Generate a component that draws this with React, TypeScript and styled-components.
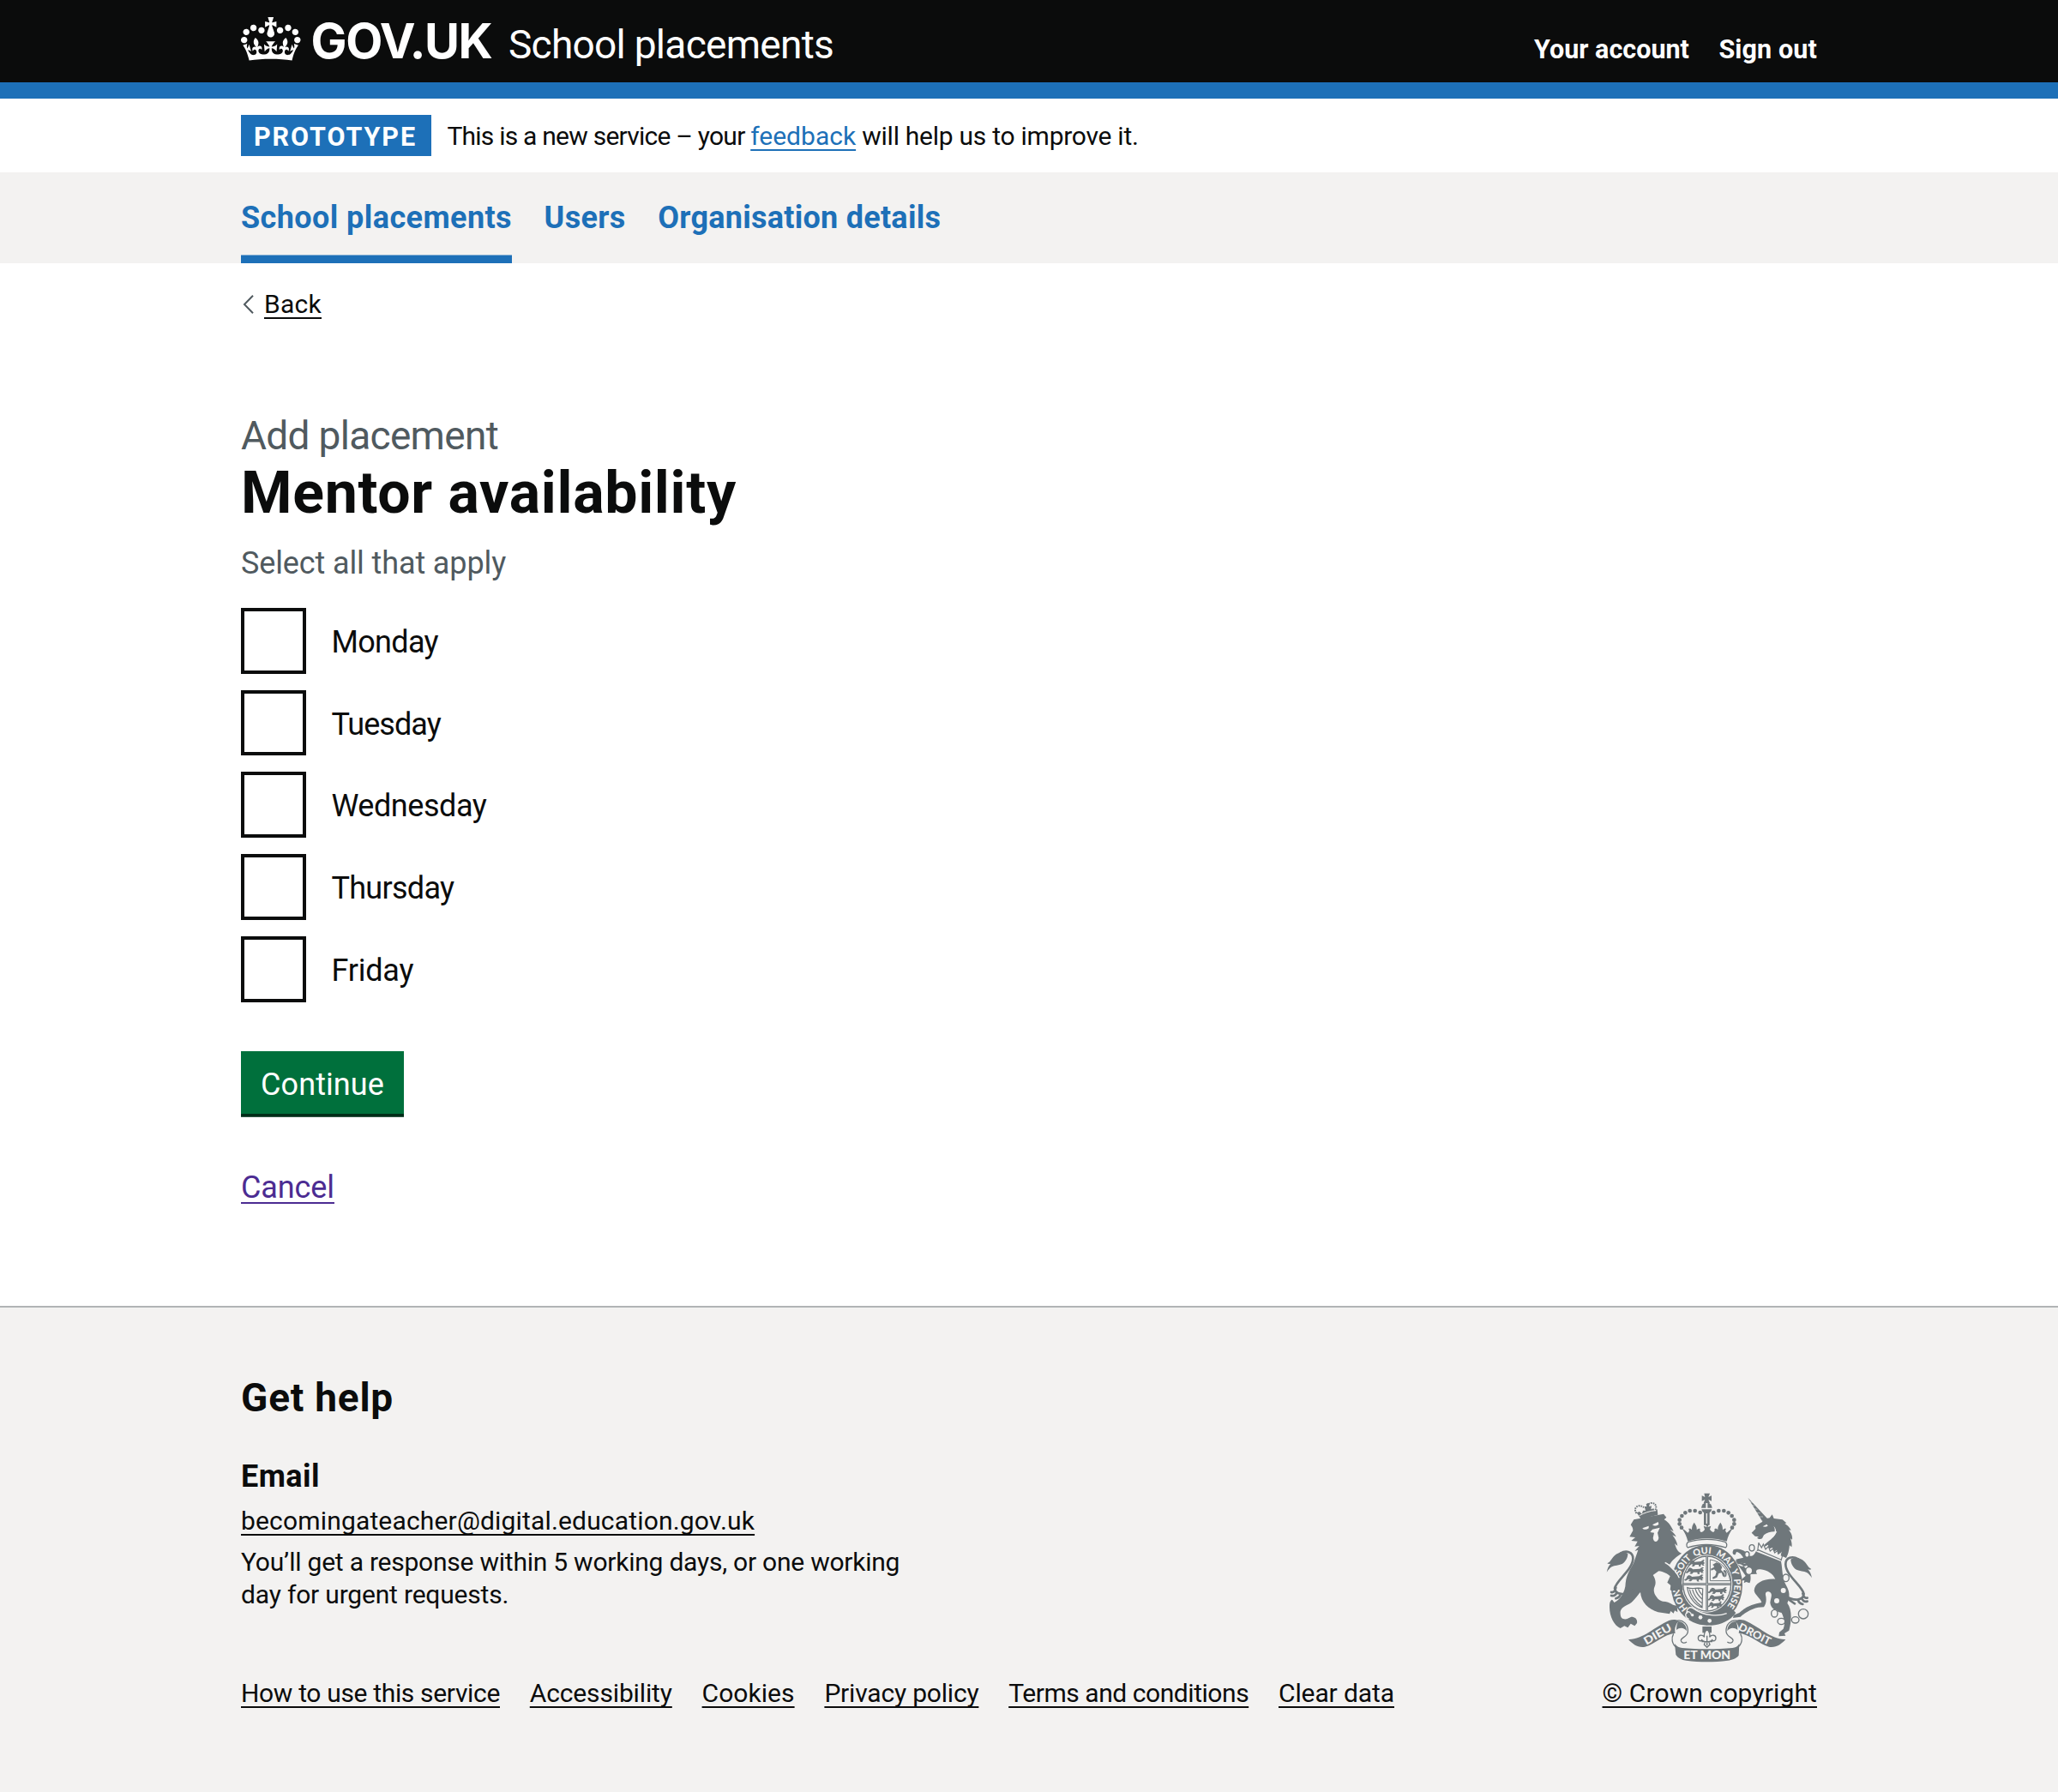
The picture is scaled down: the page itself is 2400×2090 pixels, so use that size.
import React from "react";
import styled, { createGlobalStyle } from "styled-components";

const c = {
  ink: "#0b0c0c",
  blue: "#1d70b8",
  grey: "#f3f2f1",
  secondary: "#505a5f",
  border: "#b1b4b6",
  green: "#00703c",
  greenDark: "#002d18",
  visited: "#4c2c92",
  crest: "#6f777b",
};

const GlobalStyle = createGlobalStyle`
  * { box-sizing: border-box; }
  body {
    margin: 0;
    background: #fff;
    color: ${c.ink};
    font-family: Roboto, "Liberation Sans", sans-serif;
    font-size: 30px;
  }
  h1, h2, h3, p, ul { margin: 0; padding: 0; }
  ul { list-style: none; }
`;

type Track = { $ls?: number };

const Page = styled.div`
  display: flex;
  flex-direction: column;
  min-height: 2090px;
`;

const Container = styled.div`
  width: 1838px;
  margin: 0 auto;
`;

/* Header */

const Header = styled.header`
  height: 115px;
  background: ${c.ink};
  color: #fff;
  border-bottom: 19px solid ${c.blue};
`;

const HeaderRow = styled(Container)`
  display: flex;
  align-items: baseline;
  height: 96px;
  padding-top: 18px;
`;

const Crown = styled.svg`
  align-self: flex-start;
  width: 69.5px;
  height: 51px;
  margin: 2.3px 12px 0 0;
  fill: #fff;
`;

const Wordmark = styled.span`
  width: 230.5px;
  font: 700 56px/60px Inter, sans-serif;
  letter-spacing: -1.39px;
`;

const ServiceName = styled.span`
  font-size: 46px;
  line-height: 60px;
  letter-spacing: -0.72px;
`;

const AccountNav = styled.nav`
  display: flex;
  gap: 34.5px;
  margin-left: auto;
`;

const AccountLink = styled.a<Track>`
  font-size: 30.5px;
  font-weight: 700;
  letter-spacing: ${(p) => p.$ls ?? 0}px;
`;

/* Phase banner */

const PhaseBanner = styled(Container)`
  display: flex;
  align-items: flex-start;
  gap: 18.4px;
  height: 86px;
  padding-top: 19px;
`;

const PhaseTag = styled.strong`
  width: 222px;
  height: 48px;
  padding-left: 15px;
  background: ${c.blue};
  color: #fff;
  font-size: 30.5px;
  line-height: 51px;
  letter-spacing: 1.93px;
`;

const PhaseText = styled.p`
  line-height: 50px;
  white-space: pre;
`;

const Run = styled.span<Track>`
  letter-spacing: ${(p) => p.$ls ?? 0}px;
`;

const Link = styled.a<Track & { $color?: string; $offset?: number }>`
  color: ${(p) => p.$color ?? c.ink};
  letter-spacing: ${(p) => p.$ls ?? 0}px;
  text-decoration: underline;
  text-decoration-thickness: 2px;
  text-underline-offset: ${(p) => p.$offset ?? 4.5}px;
  text-decoration-skip-ink: none;
`;

/* Primary navigation */

const NavBar = styled.nav`
  height: 105.5px;
  background: ${c.grey};
`;

const NavList = styled(Container)`
  display: flex;
  gap: 37.6px;
`;

const NavLink = styled.a<Track & { $current?: boolean }>`
  height: 105.5px;
  color: ${c.blue};
  font-size: 36px;
  font-weight: 700;
  line-height: 107px;
  letter-spacing: ${(p) => p.$ls ?? 0}px;
  box-shadow: ${(p) => (p.$current ? `inset 0 -9.5px ${c.blue}` : "none")};
`;

/* Main form */

const Main = styled(Container)`
  display: flex;
  flex-direction: column;
  align-items: flex-start;
  flex: 1;
  padding-top: 29px;
`;

const BackRow = styled.div`
  display: flex;
  align-items: center;
  gap: 12px;
  height: 38px;
  margin-bottom: 104px;
  line-height: 38px;
`;

const Chevron = styled.svg`
  width: 13px;
  height: 22px;
  margin-left: 2px;
  fill: none;
  stroke: ${c.secondary};
  stroke-width: 2;
`;

const Caption = styled.span`
  color: ${c.secondary};
  font-size: 46px;
  line-height: 60px;
  letter-spacing: -0.69px;
`;

const Title = styled.h1`
  margin-top: 1.5px;
  font-size: 68px;
  line-height: 72px;
  letter-spacing: 0.69px;
`;

const Hint = styled.div`
  margin: 22.4px 0 27.6px;
  color: ${c.secondary};
  font-size: 36px;
  line-height: 48px;
  letter-spacing: -0.12px;
`;

const Options = styled.div`
  display: flex;
  flex-direction: column;
  gap: 19.15px;
`;

const Option = styled.label<Track>`
  display: flex;
  gap: 29px;
  height: 76.6px;
  font-size: 36px;
  line-height: 81px;
  letter-spacing: ${(p) => p.$ls ?? 0}px;
`;

const Checkbox = styled.input`
  appearance: none;
  width: 76.4px;
  height: 76.6px;
  margin: 0;
  border: 4px solid ${c.ink};
  border-radius: 0;
  background: #fff;
`;

const SubmitButton = styled.button`
  width: 190px;
  height: 73px;
  margin: 57.4px 0 62.4px;
  padding: 2px 0 0;
  border: 0;
  background: ${c.green};
  box-shadow: 0 3.8px 0 ${c.greenDark};
  color: #fff;
  font: 400 36px/75px Roboto, sans-serif;
  letter-spacing: 0.1px;
`;

const CancelRow = styled.p`
  font-size: 36px;
  line-height: 48px;
`;

/* Footer */

const Footer = styled.footer`
  height: 567.4px;
  padding-top: 75.7px;
  border-top: 2px solid ${c.border};
  background: ${c.grey};
`;

const FooterRow = styled(Container)`
  display: flex;
  align-items: flex-end;
  justify-content: space-between;
`;

const HelpTitle = styled.h2`
  font-size: 46px;
  line-height: 60px;
  letter-spacing: 0.77px;
`;

const HelpSubtitle = styled.h3`
  margin: 37.4px 0 9.6px;
  font-size: 36px;
  line-height: 48px;
  letter-spacing: 0.45px;
`;

const HelpLine = styled.p<Track>`
  line-height: 38.3px;
  letter-spacing: ${(p) => p.$ls ?? 0}px;
`;

const HelpText = styled.div`
  margin: 9.6px 0 76.6px;
`;

const FooterLinks = styled.ul`
  display: flex;
  gap: 34.8px;
  line-height: 38.3px;
`;

const Copyright = styled.div`
  display: flex;
  flex-direction: column;
  align-items: center;
  gap: 17.5px;
  line-height: 38.3px;
`;

const Crest = styled.svg`
  display: block;
  width: 241.7px;
  height: 198.3px;
`;

const days: [string, number][] = [
  ["Monday", -0.65],
  ["Tuesday", -0.95],
  ["Wednesday", -0.44],
  ["Thursday", -0.7],
  ["Friday", -0.2],
];

const footerLinks: [string, number][] = [
  ["How to use this service", -0.338],
  ["Accessibility", -0.145],
  ["Cookies", 0.05],
  ["Privacy policy", -0.2],
  ["Terms and conditions", -0.444],
  ["Clear data", -0.103],
];

function CrownIcon() {
  return (
    <Crown viewBox="0 0 132 97" preserveAspectRatio="none" aria-hidden="true">
      <path d="M25 30.2c3.5 1.5 7.7-.2 9.1-3.7 1.5-3.6-.2-7.8-3.9-9.2-3.6-1.4-7.6.3-9.1 3.9-1.4 3.5.3 7.5 3.9 9zM9 39.5c3.6 1.5 7.8-.2 9.2-3.7 1.5-3.6-.2-7.8-3.9-9.1-3.6-1.5-7.6.2-9.1 3.8-1.4 3.5.3 7.5 3.8 9zM4.4 57.2c3.5 1.5 7.7-.2 9.1-3.8 1.5-3.6-.2-7.7-3.9-9.1-3.5-1.5-7.6.3-9.1 3.8-1.4 3.5.3 7.6 3.9 9.1zm38.3-21.4c3.5 1.5 7.7-.2 9.1-3.8 1.5-3.6-.2-7.7-3.9-9.1-3.6-1.5-7.6.3-9.1 3.8-1.3 3.6.4 7.7 3.9 9.1zm64.4-5.6c-3.6 1.5-7.8-.2-9.1-3.7-1.5-3.6.2-7.8 3.8-9.2 3.6-1.4 7.7.3 9.2 3.9 1.3 3.5-.4 7.5-3.9 9zm15.9 9.3c-3.6 1.5-7.7-.2-9.1-3.7-1.5-3.6.2-7.8 3.7-9.1 3.6-1.5 7.7.2 9.2 3.8 1.5 3.5-.3 7.5-3.8 9zm4.7 17.7c-3.6 1.5-7.8-.2-9.2-3.8-1.5-3.6.2-7.7 3.9-9.1 3.6-1.5 7.7.3 9.2 3.8 1.3 3.5-.4 7.6-3.9 9.1zM89.3 35.8c-3.6 1.5-7.8-.2-9.2-3.8-1.4-3.6.2-7.7 3.9-9.1 3.6-1.5 7.7.3 9.2 3.8 1.4 3.6-.3 7.7-3.9 9.1zM69.7 17.7l8.9 4.7V9.3l-8.9 2.8c-.2-.3-.5-.6-.9-.9L72.4 0H59.6l3.5 11.2c-.3.3-.6.5-.9.9l-8.8-2.8v13.1l8.8-4.7c.3.3.6.7.9.9l-5 15.4v.1c-.2.8-.4 1.6-.4 2.4 0 4.1 3.1 7.5 7 8.1h.2c.3 0 .7.1 1 .1.4 0 .7 0 1-.1h.2c4-.6 7.1-4.1 7.1-8.1 0-.8-.1-1.7-.4-2.4V34l-5.1-15.4c.4-.2.7-.6 1-.9zM66 92.8c16.9 0 32.8 1.1 47.1 3.2 4-16.9 8.9-26.7 14-33.5l-9.6-3.4c1 4.9 1.1 7.2 0 10.2-1.5-1.4-3-4.3-4.2-8.7L108.6 76c2.8-2 5-3.2 7.5-3.3-4.4 9.4-10 11.9-13.6 11.2-4.3-.8-6.3-4.6-5.6-7.9 1-4.7 5.7-5.9 8-.5 4.3-8.7-3-11.4-7.6-8.8 7.1-7.2 7.9-13.5 2.1-21.1-8 6.1-8.1 12.3-4.5 20.8-4.7-5.4-12.1-2.5-9.5 6.2 3.4-5.2 7.9-2 7.2 3.1-.6 4.3-6.4 7.8-13.5 7.2-10.3-.9-10.9-8-11.2-13.8 2.5-.5 7.1 1.8 11 7.3L80.2 60c-4.1 4.4-8 5.3-12.3 5.4 1.4-4.4 8-11.6 8-11.6H55.5s6.4 7.2 7.9 11.6c-4.2-.1-8-1-12.3-5.4l1.4 16.4c3.9-5.5 8.5-7.7 10.9-7.3-.3 5.8-.9 12.8-11.1 13.8-7.2.6-12.9-2.9-13.5-7.2-.7-5 3.8-8.3 7.1-3.1 2.7-8.7-4.6-11.6-9.4-6.2 3.7-8.5 3.6-14.7-4.6-20.8-5.8 7.6-5 13.9 2.2 21.1-4.7-2.6-11.9.1-7.7 8.8 2.3-5.5 7.1-4.2 8.1.5.7 3.3-1.3 7.1-5.7 7.9-3.5.7-9-1.8-13.5-11.2 2.5.1 4.7 1.3 7.5 3.3l-4.7-15.4c-1.2 4.4-2.7 7.2-4.3 8.7-1.1-3-.9-5.3 0-10.2l-9.5 3.4c5 6.9 9.9 16.7 14 33.5 14.8-2.1 30.8-3.2 47.7-3.2z" />
    </Crown>
  );
}

const archBeads = [
  [429, 129], [411, 123], [393, 123], [377, 130], [365, 141], [357, 155], [357, 169], [364, 182],
];

const passant =
  "M0 8l6-6 6 2 4 4 22-2 8-6 5 2-5 4 5 6-5 5 5 3-7 1-4-5-4 5 2 4-7-1-1-6-12 0-5 6-8-1 5-6-5-1-8 6-5-3 7-6z";

function Tail() {
  return (
    <g>
      <path d="M102 338c3-16 8-24 14-30-6 2-10 1-12-1 12-6 14-16 24-26 14-14 34-18 48-8 0 14-8 28-20 36-12 6-26 4-36 10-8 5-13 12-18 19z" />
      <path
        d="M150 272c20-12 44-6 44 18 0 38-58 76-64 104 2 24 36 26 62 8M134 392c-2 12-8 18-16 16M138 408c-4 10-12 14-20 12M150 416c-2 8-8 12-16 14M196 402c-8 8-16 16-34 26"
        fill="none"
        stroke={c.crest}
        strokeWidth="8"
        strokeLinecap="round"
      />
    </g>
  );
}

function SideScroll() {
  return (
    <g>
      <path d="M178 573c48 2 92-44 142-66 12-4 26-4 34 2-10 10-16 26-12 42-40 4-70 38-106 48-24 4-42-8-58-26z" />
      <path
        d="M346 508c24-6 42 14 40 38-2 20-26 20-24 32 2 8 12 10 20 4M336 553c-8 14-8 36 12 50"
        fill="none"
        stroke={c.crest}
        strokeWidth="4"
      />
      <path d="M352 510c16 0 30 14 30 34-8-12-24-14-36-4 0-12 2-22 6-30z" />
    </g>
  );
}

function RoyalArms() {
  return (
    <Crest viewBox="100 60 725 595" fill={c.crest} aria-hidden="true">
      {/* imperial crown */}
      <path d="M443 62h20l-5 13 11-5v19l-11-5 5 12h-22l5-12-11 5V70l11 5z" />
      <path d="M433 113a19 19 0 0 1 38 0z" />
      <path d="M434 118h36c-2 7-6 11-8 12v43h-20v-43c-4-2-7-6-8-12z" />
      <path d="M449 96h6v20h-6zM450 132h4v36h-4z" fill={c.grey} />
      {archBeads.map(([x, y]) => (
        <g key={x + "-" + y}>
          <circle cx={x} cy={y} r="7" />
          <circle cx={905 - x} cy={y} r="7" />
        </g>
      ))}
      <path d="M366 186c8 2 12 8 20 14 6-4 6-10 2-14 6-2 10 0 12 4 0-10 2-18 8-26 6 8 10 16 9 26 4-4 8-6 12-3-2 6 0 10 4 11 6-2 10-6 12-10l-4-12 12 4-6-12h14l-6 12 12-4-4 12c4 6 8 8 12 10 4-2 6-6 4-11 5-3 9-1 12 3-1-10 3-18 9-26 6 8 8 16 8 26 4-4 7-6 12-4-4 5-3 10 2 14 8-6 12-12 20-14-10 14-16 28-20 44-44-14-94-14-136 0-4-16-10-30-20-44z" />
      <path
        d="M388 232c40-12 90-12 128 0 8 4 8 16 2 20-42-14-92-14-132 0-6-4-6-16 2-20z"
        fill={c.grey}
        stroke={c.crest}
        strokeWidth="4"
      />

      {/* garter */}
      <ellipse cx="452" cy="383" rx="125" ry="141" />
      <ellipse cx="453" cy="378" rx="89" ry="101" fill={c.grey} />
      <ellipse cx="453" cy="378" rx="84" ry="96" fill="none" stroke={c.crest} strokeWidth="4" />
      <path d="M449 282h8v190h-8zM370 376h166v8H370z" />
      <path d="M453 282v190M370 380h166" stroke={c.grey} strokeWidth="1.5" />
      <g>
        <path d={passant} transform="translate(394 294)" />
        <path d={passant} transform="translate(386 320) scale(1.1 1)" />
        <path d={passant} transform="translate(382 346) scale(1.15 1)" />
        <path d={passant} transform="translate(464 390) scale(1.15 1)" />
        <path d={passant} transform="translate(463 415)" />
        <path d={passant} transform="translate(462 440) scale(.85 .95)" />
      </g>
      <path d="M472 312l14-8 12 4 8 12-4 10 12 12 2 14-8-4-4-12-10 2-6 14-14 6-2-6 10-6 4-14-8-8-10 4-2-6 12-6-2-6zM512 330c10 0 12 12 8 24l-5-2c3-8 2-14-5-16z" />
      <path d="M464 294c38 6 64 34 70 74h-70z" fill="none" stroke={c.crest} strokeWidth="3" />
      <path
        d="M384 392c22 8 34-4 54 4l-2 66c-22-8-46-32-52-70zM392 398c4 20 18 42 44 62M402 398c4 18 14 34 33 48M412 396c4 14 12 26 24 36M422 394c3 10 8 18 14 24"
        fill="none"
        stroke={c.crest}
        strokeWidth="3.5"
      />
      <path d="M378 470c8-10 24-14 34-2 34 22 82 24 128-2l14 14c-20 28-52 42-86 44-34 0-68-14-88-34z" />
      <path
        d="M384 482c-6-14 8-26 20-18 40 30 92 28 118 18M390 502c-10-2-16-14-8-24 6-4 16 0 16 10"
        fill="none"
        stroke={c.grey}
        strokeWidth="4"
      />
      <circle cx="402" cy="488" r="5" fill={c.grey} />
      <circle cx="430" cy="496" r="7" fill={c.grey} />
      <circle cx="462" cy="508" r="7" fill={c.grey} />
      <path id="garter-line" d="M390 467A96 110 0 1 1 514 467" fill="none" />
      <g fill={c.grey} fontFamily="Lato, sans-serif" fontWeight="900" fontSize="32">
        <text><textPath href="#garter-line" startOffset="4">HON</textPath></text>
        <text><textPath href="#garter-line" startOffset="126">SOIT</textPath></text>
        <text><textPath href="#garter-line" startOffset="210">QUI</textPath></text>
        <text><textPath href="#garter-line" startOffset="286">MAL</textPath></text>
        <text><textPath href="#garter-line" startOffset="364">Y</textPath></text>
        <text><textPath href="#garter-line" startOffset="396" textLength="100">PENSE</textPath></text>
      </g>

      {/* lion */}
      <path d="M207 130l10-4 8 8 4-12 9 0-4-14h8l-2-8 6-4 5 4 0 8 8-2-2 12 9-3 5 10 8-8 2 20c-20 4-38 10-56 20z" />
      <path d="M216 140c18-10 36-16 56-18" fill="none" stroke={c.grey} strokeWidth="3" />
      <path
        d="M206 132c-8-12-4-24 8-26 8-1 14 2 18 6M272 120c6-10 2-22-10-24-8-1-14 3-18 8"
        fill="none"
        stroke={c.crest}
        strokeWidth="6"
        strokeDasharray="5 3"
      />
      <path
        d="M197 154l104-20 10 12-8 8c12 6 24 20 33 41l-13-7c10 10 18 16 22 26l-13-6c10 14 16 24 18 38l-10-8c6 20 12 30 24 34-18 12-34 24-42 40l-16-10c12 12 26 24 38 40 10 16 24 30 24 56 0 6-6 10-10 4l-4-14-4 18-8 0-4-16-6 14-8-4 2-16-12-10 10-22c-8-8-24-16-40-18l-20 14c8 12 12 26 6 40-6 12-2 26 6 36 6 10 14 14 22 16 14 0 24 4 36 12l14 4 2 22-10-6-4 10-10-8-4 10-40-6c-34-10-60-36-62-70-14 14-24 36-46 44-18 8-26 18-24 32 0 16 10 20 22 18l16-8c14 0 22 8 20 22l-8 10-14-8-10 14-12-6-14 8c-22-8-38-42-38-72 0-14 0-22 8-28 4 2 6 6 8 10 18-6 40-36 40-68 4-36 22-56 28-70l16-46-12 4 16-18-16 2 10-18-22-2 14-12-20-2 12-22c0-10-4-14-8-20z"
      />
      <path d="M306 304l16 10c14 12 26 26 34 44" fill="none" stroke={c.grey} strokeWidth="4" />
      <path d="M227 184l22-8v8c-8 6-18 6-22 0zM262 172l20-10 2 8c-4 6-16 8-22 2zM262 188l26-6-8 18 4 18c-4 18-18 16-20 0l4-18-14-2z" fill={c.grey} />

      <Tail />

      {/* unicorn */}
      <path d="M596 77l68 73-18 9z" />
      <path d="M600 90l12 4M608 102l12 4M617 116l12 2M627 130l12 1M636 144l13 0" stroke={c.grey} strokeWidth="1.5" />
      <path d="M609 200l14-14-1-10 24-14 4-10 22-4 9-12 6 14 30 4 14 12-6 2c12 8 18 14 22 24l-8-2c8 10 14 20 12 34l-6-4c4 12 6 20 4 30l-7-6c-2 12-2 26-12 44l-86-36c12-16 38-26 54-56-18-2-34 2-46 12l-6 12c-6 4-14 2-18-2l6-4-13-2z" />
      <path d="M648 178l14-8 4 6c-6 4-12 4-18 2z" fill={c.grey} />
      <path d="M684 208c8-10 8-22 2-32 14 14 10 32-6 42z" fill={c.grey} />
      <path d="M630 232l14 8 6-6 6 14 10-6 6 14 10-4 6 14 10-6 4 12 12-6-6 28-78-34z" fill={c.grey} />
      <path d="M634 236l10 16 6-12 8 18 10-10 6 16 10-8 6 14 10-8 2 12 10-6M632 260l80 34M630 264l4-30M712 298l8-30" fill="none" stroke={c.crest} strokeWidth="3.5" />
      <path d="M626 266l86 34c6 28 2 56 20 88 12 22 10 40 2 58 16 20 16 60 6 96l-16 10 4 8-24 2 2-14 14-12c8-18 2-40-6-56-24-6-38-18-40-36 2-16 8-26 2-34-10-8-20-4-18 8 4 16 2 30-6 42-30 0-56 12-82 34l-26 4 2-10 20-8c20-20 50-32 78-36-4-16-24-26-26-42 2-26 32-42 74-40-8-18-28-32-52-34-16-2-18 8-12 16l-22 1 4-10-24-28-26-4-6-10 26-6c-4-8-14-20-24-20l-4 10c-10 0-12-8-6-18 18-8 44 4 52 20 10 6 20 2 28-18z" />
      <path d="M552 296c10 20 26 28 44 16M560 310c12-4 30 12 44 34 4 16 0 30-2 32l-12-4-8 4 2-10-10 2c0-8 12-14 14-18z" />
      <g transform="translate(922 20) scale(-1 1)">
        <Tail />
      </g>
      <g fill={c.grey} stroke={c.crest} strokeWidth="4">
        <ellipse cx="610" cy="253" rx="9" ry="11" />
        <ellipse cx="593" cy="276" rx="8" ry="10" />
        <ellipse cx="600" cy="333" rx="12" ry="13" />
        <ellipse cx="729" cy="358" rx="11" ry="13" />
        <ellipse cx="689" cy="482" rx="11" ry="13" />
        <ellipse cx="713" cy="510" rx="13" ry="11" />
        <ellipse cx="762" cy="505" rx="13" ry="11" />
        <circle cx="790" cy="484" r="17" />
      </g>
      <circle cx="720" cy="402" r="9" fill={c.grey} />
      <circle cx="697" cy="438" r="9" fill={c.grey} />

      {/* motto scroll */}
      <SideScroll />
      <g transform="translate(906 0) scale(-1 1)">
        <SideScroll />
      </g>
      <path d="M340 588c8 10 16 14 26 15 56 5 120 5 176 0 10-1 18-5 24-15l-2 41c-10 12-24 16-38 18-50 6-96 6-146 0-16-2-28-8-36-20z" />
      <path d="M437 528h32v22h-32z" />
      <path
        d="M453 538c-8 8-12 16-9 27-8-10-22-8-22 4 0 10 10 12 13 6 4 4 8 6 12 6l-4 10 10 10 10-10-4-10c4 0 8-2 12-6 3 6 13 4 13-6 0-12-14-14-22-4 3-11-1-19-9-27z"
        fill={c.grey}
        stroke={c.crest}
        strokeWidth="4"
      />
      <path d="M453 560v34M434 581h38" stroke={c.crest} strokeWidth="4" />
      <g fill={c.grey} fontFamily="Lato, sans-serif" fontWeight="900">
        <text x="371" y="641" fontSize="41" textLength="164" lengthAdjust="spacingAndGlyphs">ET MON</text>
        <text transform="translate(241 593) rotate(-30)" fontSize="38" textLength="106" lengthAdjust="spacingAndGlyphs">DIEU</text>
        <text transform="translate(560 538) rotate(27)" fontSize="37" textLength="122" lengthAdjust="spacingAndGlyphs">DROIT</text>
      </g>
    </Crest>
  );
}

export default function App() {
  return (
    <Page>
      <GlobalStyle />
      <Header>
        <HeaderRow>
          <CrownIcon />
          <Wordmark>GOV.UK</Wordmark>
          <ServiceName>School placements</ServiceName>
          <AccountNav>
            <AccountLink>Your account</AccountLink>
            <AccountLink $ls={0.13}>Sign out</AccountLink>
          </AccountNav>
        </HeaderRow>
      </Header>

      <PhaseBanner>
        <PhaseTag>PROTOTYPE</PhaseTag>
        <PhaseText>
          <Run $ls={-0.77}>{"This is a new service – your "}</Run>
          <Link $color={c.blue}>feedback</Link>
          <Run $ls={-0.26}>{" will help us to improve it."}</Run>
        </PhaseText>
      </PhaseBanner>

      <NavBar>
        <NavList>
          <NavLink $current $ls={0.416}>School placements</NavLink>
          <NavLink $ls={0.33}>Users</NavLink>
          <NavLink $ls={0.26}>Organisation details</NavLink>
        </NavList>
      </NavBar>

      <Main as="main">
        <BackRow>
          <Chevron viewBox="0 0 13 22">
            <path d="M12 .8 2 11l10 10.2" />
          </Chevron>
          <Link $ls={0.27}>Back</Link>
        </BackRow>
        <Caption>Add placement</Caption>
        <Title>Mentor availability</Title>
        <Hint>Select all that apply</Hint>
        <Options>
          {days.map(([day, ls]) => (
            <Option key={day} $ls={ls}>
              <Checkbox type="checkbox" />
              {day}
            </Option>
          ))}
        </Options>
        <SubmitButton>Continue</SubmitButton>
        <CancelRow>
          <Link $color={c.visited} $ls={-0.1} $offset={4.5}>Cancel</Link>
        </CancelRow>
      </Main>

      <Footer>
        <FooterRow>
          <div>
            <HelpTitle>Get help</HelpTitle>
            <HelpSubtitle>Email</HelpSubtitle>
            <HelpLine>
              <Link $ls={0.165}>becomingateacher@digital.education.gov.uk</Link>
            </HelpLine>
            <HelpText>
              <HelpLine $ls={-0.235}>You’ll get a response within 5 working days, or one working</HelpLine>
              <HelpLine $ls={-0.19}>day for urgent requests.</HelpLine>
            </HelpText>
            <FooterLinks>
              {footerLinks.map(([label, ls]) => (
                <li key={label}>
                  <Link $ls={ls}>{label}</Link>
                </li>
              ))}
            </FooterLinks>
          </div>
          <Copyright>
            <RoyalArms />
            <Link $ls={0.122}>© Crown copyright</Link>
          </Copyright>
        </FooterRow>
      </Footer>
    </Page>
  );
}
